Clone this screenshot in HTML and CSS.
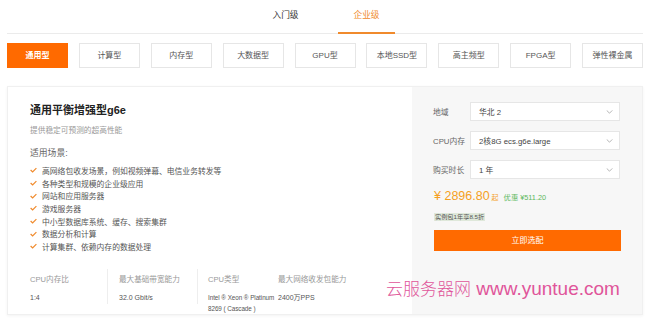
FILE: index.html
```html
<!DOCTYPE html>
<html lang="zh">
<head>
<meta charset="utf-8">
<link rel="stylesheet" href="styles.css">
</head>
<body>
<div class="page">
  <div class="tabs">
    <div class="tab">入门级</div>
    <div class="tab active">企业级</div>
  </div>
  <div class="types">
    <div class="type active">通用型</div>
    <div class="type">计算型</div>
    <div class="type">内存型</div>
    <div class="type">大数据型</div>
    <div class="type">GPU型</div>
    <div class="type">本地SSD型</div>
    <div class="type">高主频型</div>
    <div class="type">FPGA型</div>
    <div class="type">弹性裸金属</div>
  </div>
  <div class="card">
    <div class="info">
      <h1 class="title">通用平衡增强型g6e</h1>
      <p class="subtitle">提供稳定可预测的超高性能</p>
      <p class="scene">适用场景:</p>
      <ul class="list">
        <li><svg class="chk" viewBox="0 0 8 6"><polyline points="0.7,3 3,5.2 7.3,0.8"/></svg>高网络包收发场景，例如视频弹幕、电信业务转发等</li>
        <li><svg class="chk" viewBox="0 0 8 6"><polyline points="0.7,3 3,5.2 7.3,0.8"/></svg>各种类型和规模的企业级应用</li>
        <li><svg class="chk" viewBox="0 0 8 6"><polyline points="0.7,3 3,5.2 7.3,0.8"/></svg>网站和应用服务器</li>
        <li><svg class="chk" viewBox="0 0 8 6"><polyline points="0.7,3 3,5.2 7.3,0.8"/></svg>游戏服务器</li>
        <li><svg class="chk" viewBox="0 0 8 6"><polyline points="0.7,3 3,5.2 7.3,0.8"/></svg>中小型数据库系统、缓存、搜索集群</li>
        <li><svg class="chk" viewBox="0 0 8 6"><polyline points="0.7,3 3,5.2 7.3,0.8"/></svg>数据分析和计算</li>
        <li><svg class="chk" viewBox="0 0 8 6"><polyline points="0.7,3 3,5.2 7.3,0.8"/></svg>计算集群、依赖内存的数据处理</li>
      </ul>
      <div class="stats">
        <div class="stat s1"><div class="lbl">CPU内存比</div><div class="val">1:4</div></div>
        <div class="stat s2"><div class="lbl">最大基础带宽能力</div><div class="val">32.0 Gbit/s</div></div>
        <div class="stat s3"><div class="lbl">CPU类型</div><div class="val nw">Intel ® Xeon ® Platinum<br>8269 ( Cascade )</div></div>
        <div class="stat s4"><div class="lbl">最大网络收发包能力</div><div class="val">2400万PPS</div></div>
      </div>
    </div>
    <div class="buy">
      <div class="row"><span class="flbl">地域</span><div class="sel"><span>华北 2</span><svg class="chev" viewBox="0 0 8 5"><polyline points="0.5,0.5 4,4 7.5,0.5"/></svg></div></div>
      <div class="row"><span class="flbl">CPU内存</span><div class="sel"><span>2核8G ecs.g6e.large</span><svg class="chev" viewBox="0 0 8 5"><polyline points="0.5,0.5 4,4 7.5,0.5"/></svg></div></div>
      <div class="row"><span class="flbl">购买时长</span><div class="sel"><span>1 年</span><svg class="chev" viewBox="0 0 8 5"><polyline points="0.5,0.5 4,4 7.5,0.5"/></svg></div></div>
      <div class="price"><span class="amt">¥ 2896.80</span><span class="qi">起</span><span class="disc">优惠 ¥511.20</span></div>
      <div class="badge">实例包1年享8.5折</div>
      <div class="btn">立即选配</div>
    </div>
  </div>
  <div class="watermark"><span class="wm-cn">云服务器网</span> www.yuntue.com</div>
</div>
</body>
</html>
```

FILE: styles.css
```css
* { box-sizing: border-box; }
html, body { margin: 0; padding: 0; background: #fff; }
body {
  font-family: "Liberation Sans", "Noto Sans CJK SC", sans-serif;
  color: #333;
  width: 650px;
  height: 322px;
  overflow: hidden;
}
.page { position: relative; padding: 0 7px; }

.tabs {
  display: flex;
  justify-content: center;
  gap: 24px;
  border-bottom: 1px solid #ebebeb;
  padding-left: 2px;
}
.tab {
  width: 57px;
  height: 34px;
  margin-bottom: -1px;
  line-height: 30px;
  text-align: center;
  font-size: 8.7px;
  color: #333;
  border-bottom: 2px solid transparent;
}
.tab.active { color: #f08a2c; border-bottom-color: #f08a2c; }

.types {
  display: flex;
  justify-content: space-between;
  margin-top: 9px;
}
.type {
  width: 61px;
  height: 25px;
  line-height: 23px;
  border: 1px solid #e6e6e6;
  text-align: center;
  font-size: 8px;
  color: #555;
  background: #fff;
}
.type.active { background: #ff6a00; border-color: #ff6a00; color: #fff; font-weight: bold; }

.card {
  display: flex;
  margin-top: 18px;
  height: 229px;
  border: 1px solid #f0f0f0;
  box-shadow: 0 1px 3px rgba(0,0,0,0.05);
}
.info { width: 405px; padding: 16px 0 0 22px; }
.title { margin: 0; font-size: 11px; line-height: 14px; font-weight: bold; color: #222; }
.subtitle { margin: 8px 0 0; font-size: 7.7px; line-height: 12px; color: #999; }
.scene { margin: 10px 0 0; font-size: 8.8px; line-height: 12px; color: #666; }
.list { list-style: none; margin: 5px 0 0; padding: 0; }
.list li {
  display: flex;
  align-items: center;
  height: 12.7px;
  font-size: 7.8px;
  color: #555;
}
.chk { width: 7px; height: 6px; margin-right: 5px; flex: none; }
.chk polyline { fill: none; stroke: #f08a2c; stroke-width: 1.4; }

.stats { display: flex; margin-top: 16px; }
.stat { height: 35px; padding-top: 5px; }
.s1 { width: 78px; border-right: 1px solid #eee; }
.s2 { width: 90px; padding-left: 11px; border-right: 1px solid #eee; }
.s3 { width: 80px; padding-left: 10px; }
.s4 { padding-left: 0; }
.lbl { font-size: 7.6px; line-height: 12px; color: #999; white-space: nowrap; }
.val { margin-top: 6.5px; font-size: 7px; line-height: 11px; color: #555; white-space: nowrap; }
.val.nw { font-size: 6.3px; letter-spacing: -0.05px; }

.buy {
  flex: 1;
  background: #f7f7f7;
  padding: 15px 21px 0 21px;
}
.row { display: flex; align-items: center; height: 19px; margin-bottom: 10px; }
.flbl { width: 37px; font-size: 7.8px; color: #666; white-space: nowrap; }
.sel {
  width: 150px;
  height: 19px;
  background: #fff;
  border: 1px solid #e6e6e6;
  display: flex;
  align-items: center;
  justify-content: space-between;
  padding: 0 6px 0 8px;
  font-size: 7.8px;
  color: #444;
}
.chev { width: 7px; height: 4px; }
.chev polyline { fill: none; stroke: #999; stroke-width: 0.9; }

.price { display: flex; align-items: baseline; height: 16px; padding-left: 1px; }
.amt { font-size: 12.5px; color: #f5a01e; }
.qi { font-size: 7px; color: #f5a01e; margin-left: 2px; }
.disc { font-size: 7.3px; color: #5cb85c; margin-left: 5px; }
.badge {
  display: inline-block;
  margin-top: 4px;
  margin-left: 1px;
  height: 8px;
  line-height: 8px;
  padding: 0 1px;
  font-size: 6.2px;
  color: #555;
  background: #dfe8da;
}
.btn {
  margin-top: 7px;
  margin-left: 1px;
  width: 187px;
  height: 21px;
  line-height: 21px;
  background: #ff6a00;
  color: #fff;
  text-align: center;
  font-size: 8px;
}

.watermark {
  position: absolute;
  left: 386px;
  top: 275px;
  font-size: 19px;
  color: #e0559a;
  white-space: nowrap;
}
.wm-cn { font-size: 17px; font-family: "Noto Sans CJK SC", serif; font-weight: 300; }
```
